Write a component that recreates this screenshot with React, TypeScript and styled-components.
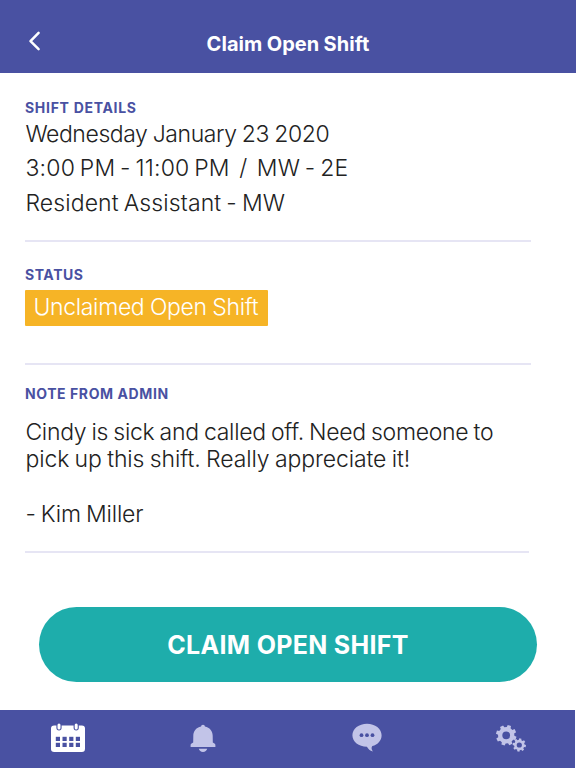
import React from "react";
import styled, { createGlobalStyle } from "styled-components";

const indigo = "#4951a2";
const muted = "#c2c4e8";

const GlobalStyle = createGlobalStyle`
  *, *::before, *::after { box-sizing: border-box; }
  body { margin: 0; background: #fff; }
  button { font: inherit; border: 0; padding: 0; background: none; cursor: pointer; }
`;

const Screen = styled.div`
  width: 576px;
  height: 768px;
  display: flex;
  flex-direction: column;
  overflow: hidden;
  background: #fff;
  color: #222;
  font-family: Inter, "Liberation Sans", sans-serif;
`;

const Header = styled.header`
  flex: none;
  height: 73px;
  display: grid;
  grid-template-columns: 72px 1fr 72px;
  align-items: center;
  padding-top: 14px;
  background: ${indigo};
  color: #fff;
`;

const BackButton = styled.button`
  display: flex;
  padding: 0 0 6px 27px;
  color: #fff;
`;

const Title = styled.h1`
  margin: 0;
  font-size: 20px;
  font-weight: 700;
  line-height: 24px;
  letter-spacing: 0.06px;
  word-spacing: -0.5px;
  text-align: center;
`;

const Content = styled.main`
  flex: 1;
  display: flex;
  flex-direction: column;
  align-items: flex-start;
  padding-left: 25px;
`;

const Section = styled.section<{ $height: number; $top: number; $width?: number }>`
  flex: none;
  width: ${(p) => p.$width ?? 506}px;
  height: ${(p) => p.$height}px;
  padding-top: ${(p) => p.$top}px;
  border-bottom: 2px solid #e6e5f4;
`;

const Label = styled.h2<{ $spacing: number }>`
  margin: 0;
  color: ${indigo};
  font-size: 14px;
  font-weight: 700;
  line-height: 18px;
  letter-spacing: ${(p) => p.$spacing}px;
`;

const Line = styled.div<{ $spacing: number; $leading?: number; $word?: number }>`
  padding-left: 0.4px;
  font-size: 23px;
  font-weight: 350;
  line-height: ${(p) => p.$leading ?? 34.3}px;
  letter-spacing: ${(p) => p.$spacing}px;
  word-spacing: ${(p) => p.$word ?? 0}px;
  white-space: pre;
`;

const Badge = styled.div`
  width: 243px;
  height: 36px;
  margin-top: 6px;
  padding-left: 8.5px;
  border-radius: 1px;
  background: #f6b426;
  color: #fff;
  font-size: 23px;
  font-weight: 300;
  line-height: 34px;
  letter-spacing: -0.34px;
  word-spacing: -0.6px;
  white-space: nowrap;
`;

const Note = styled.div`
  padding-top: 16px;
`;

const Gap = styled.div`
  height: 27.2px;
`;

const ClaimButton = styled.button`
  width: 498px;
  height: 75px;
  margin: 54px 0 0 14px;
  border-radius: 38px;
  background: #1eadab;
  color: #fff;
  && { font-family: Inter, sans-serif; font-size: 25px; font-weight: 700; letter-spacing: 0.3px; }
`;

const TabBar = styled.nav`
  flex: none;
  width: 575px;
  height: 58px;
  display: grid;
  grid-template-columns: 135px 136px 192px 96px;
  background: ${indigo};
`;

const Tab = styled.button<{ $active?: boolean }>`
  display: flex;
  justify-content: center;
  padding-top: 12px;
  color: ${(p) => (p.$active ? "#fff" : muted)};
  svg { display: block; flex: none; }
`;

function gear(cx: number, cy: number, outer: number, inner: number, hole: number, start: number) {
  const point = (r: number, deg: number) => {
    const a = (deg * Math.PI) / 180;
    return `${(cx + r * Math.cos(a)).toFixed(2)} ${(cy + r * Math.sin(a)).toFixed(2)}`;
  };
  const points: string[] = [];
  for (let i = 0; i < 8; i++) {
    const a = start + i * 45;
    points.push(point(inner, a - 14), point(outer, a - 9.5), point(outer, a + 9.5), point(inner, a + 14));
  }
  return (
    `M${points.join("L")}Z` +
    `M${cx + hole} ${cy}A${hole} ${hole} 0 1 0 ${cx - hole} ${cy}A${hole} ${hole} 0 1 0 ${cx + hole} ${cy}Z`
  );
}

const CalendarIcon = () => (
  <svg width="36" height="32" viewBox="0 0 36 32">
    <rect x="1" y="3.4" width="34" height="26.6" rx="3.2" fill="currentColor" />
    {[9, 26.2].map((x) => (
      <React.Fragment key={x}>
        <rect x={x - 2.6} y="0.4" width="5.2" height="8" rx="2.6" fill={indigo} />
        <rect x={x - 1.5} y="1.4" width="3" height="6" rx="1.5" fill="currentColor" />
      </React.Fragment>
    ))}
    {[14.8, 20.8].map((y) =>
      [5.8, 12.5, 19.2, 25.8].map((x) => (
        <rect key={`${x}-${y}`} x={x} y={y} width="4.2" height="4.2" fill={indigo} />
      )),
    )}
  </svg>
);

const BellIcon = () => (
  <svg width="26" height="32" viewBox="0 0 26 32" fill="currentColor">
    <path d="M13 2.800c1.200 0 1.800.8 1.900 1.800 4.800 1 7.700 4.500 7.800 9.200l.1 6.600 1.700 1.200c.7.5.9 1 .9 2v1.400H.6v-1.400c0-1 .2-1.500.9-2l1.700-1.200.1-6.600c.1-4.700 3-8.200 7.800-9.200.1-1 .7-1.800 1.900-1.800Z" />
    <path d="M8.800 26.800h8.400c-.5 1.900-2 3.200-4.200 3.200s-3.700-1.300-4.200-3.200Z" />
  </svg>
);

const ChatIcon = () => (
  <svg width="30" height="32" viewBox="0 0 30 32">
    <path
      fill="currentColor"
      d="M15 1.700c8.200 0 14.600 5 14.600 11.500 0 5.200-3.700 9.400-9.300 10.900-1.200 1.600-.8 3.600.6 5.500-3.100-.8-4.600-2.600-6-4.900C6.700 24.700.4 19.700.4 13.200.4 6.700 6.800 1.700 15 1.700Z"
    />
    {[9.5, 15, 20.5].map((x) => (
      <circle key={x} cx={x} cy="13.200" r="1.900" fill={indigo} />
    ))}
  </svg>
);

const CogsIcon = () => (
  <svg width="30" height="32" viewBox="0 0 30 32" fill="currentColor" fillRule="evenodd">
    <path d={gear(10.2, 13.3, 10.4, 8.2, 3.9, -72)} />
    <path d={gear(23.3, 23, 6.7, 5.2, 2.6, -81)} />
  </svg>
);

export default function App() {
  return (
    <Screen>
      <GlobalStyle />
      <Header>
        <BackButton aria-label="Back">
          <svg width="15" height="20" viewBox="0 0 15 20" fill="none" stroke="currentColor" strokeWidth="2.5" strokeLinecap="round" strokeLinejoin="round">
            <path d="M11.600 1.900 3.500 10.200l8.100 7.900" />
          </svg>
        </BackButton>
        <Title>Claim Open Shift</Title>
      </Header>
      <Content>
        <Section $height={169} $top={26}>
          <Label $spacing={0.7}>SHIFT DETAILS</Label>
          <Line $spacing={-0.42} $word={-0.8}>Wednesday January 23 2020</Line>
          <Line $spacing={0.22} $word={-2}>{"3:00 PM - 11:00 PM  /  MW - 2E"}</Line>
          <Line $spacing={0.11} $word={-1.5}>Resident Assistant - MW</Line>
        </Section>
        <Section $height={123} $top={24}>
          <Label $spacing={0.55}>STATUS</Label>
          <Badge>Unclaimed Open Shift</Badge>
        </Section>
        <Section $height={188} $top={20} $width={504}>
          <Label $spacing={0.58}>NOTE FROM ADMIN</Label>
          <Note>
            <Line $leading={27.2} $spacing={-0.29} $word={-1}>Cindy is sick and called off. Need someone to</Line>
            <Line $leading={27.2} $spacing={-0.1} $word={-1}>pick up this shift. Really appreciate it!</Line>
            <Gap />
            <Line $leading={27.2} $spacing={-0.22} $word={-1}>- Kim Miller</Line>
          </Note>
        </Section>
        <ClaimButton>CLAIM OPEN SHIFT</ClaimButton>
      </Content>
      <TabBar>
        <Tab $active aria-label="Schedule"><CalendarIcon /></Tab>
        <Tab aria-label="Alerts"><BellIcon /></Tab>
        <Tab aria-label="Messages"><ChatIcon /></Tab>
        <Tab aria-label="Settings"><CogsIcon /></Tab>
      </TabBar>
    </Screen>
  );
}
